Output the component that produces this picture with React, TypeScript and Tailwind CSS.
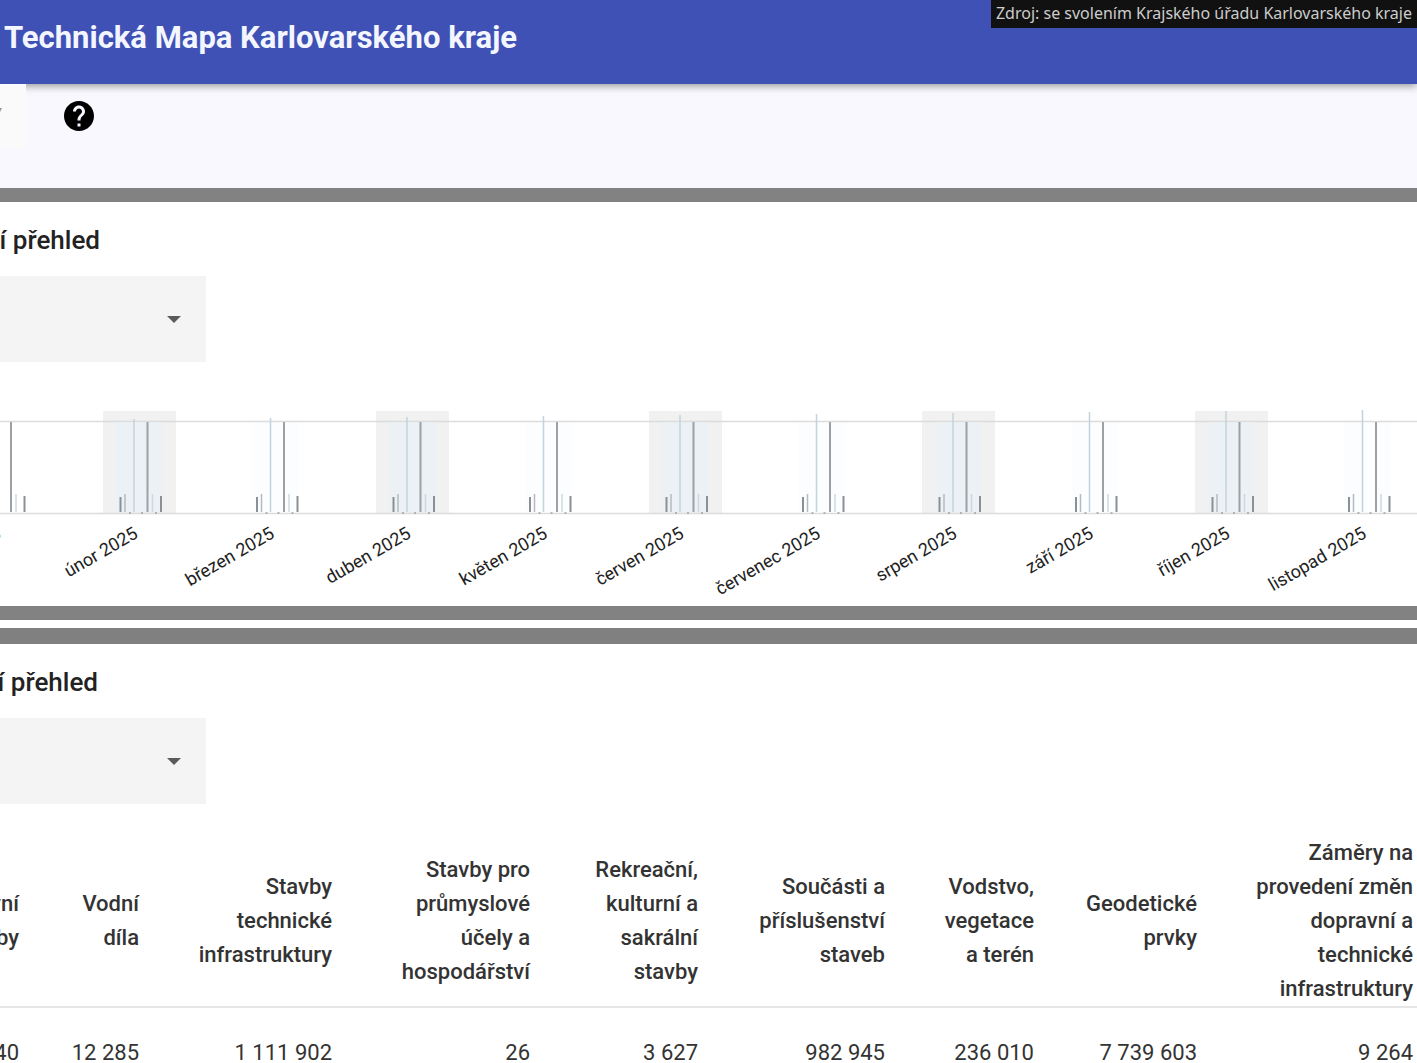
import React from 'react';
import { MdHelp } from 'react-icons/md';

interface OverviewSelectProps {
  labelledBy: string;
}

interface Column {
  lines: string[];
  value: string;
}

const months = [
  'únor 2025',
  'březen 2025',
  'duben 2025',
  'květen 2025',
  'červen 2025',
  'červenec 2025',
  'srpen 2025',
  'září 2025',
  'říjen 2025',
  'listopad 2025',
];

const columns: Column[] = [
  { lines: ['vní', 'by'], value: '40' },
  { lines: ['Vodní', 'díla'], value: '12 285' },
  { lines: ['Stavby', 'technické', 'infrastruktury'], value: '1 111 902' },
  { lines: ['Stavby pro', 'průmyslové', 'účely a', 'hospodářství'], value: '26' },
  { lines: ['Rekreační,', 'kulturní a', 'sakrální', 'stavby'], value: '3 627' },
  { lines: ['Součásti a', 'příslušenství', 'staveb'], value: '982 945' },
  { lines: ['Vodstvo,', 'vegetace', 'a terén'], value: '236 010' },
  { lines: ['Geodetické', 'prvky'], value: '7 739 603' },
  { lines: ['Záměry na', 'provedení změn', 'dopravní a', 'technické', 'infrastruktury'], value: '9 264' },
];

const OverviewSelect: React.FC<OverviewSelectProps> = ({ labelledBy }) => {
  return (
    <div className="relative w-[206px]">
      <select
        aria-labelledby={labelledBy}
        className="block h-[86px] w-full appearance-none bg-[#f4f4f4] px-4 text-[22px] text-[#333]"
      >
        <option value=""></option>
      </select>
      <svg
        viewBox="0 0 16 8"
        className="pointer-events-none absolute right-6 top-10 h-2 w-4"
        fill="#5a5a5a"
        aria-hidden="true"
      >
        <path d="M1 0h14L8 7z" />
      </svg>
    </div>
  );
};

const MonthlyChart: React.FC = () => {
  return (
    <svg viewBox="0 0 1417 202" className="block w-full font-[Roboto,sans-serif]">
      {months.map((month, i) =>
        i % 2 === 0 ? (
          <rect key={month} x={103 + i * 136.5} y={7} width={73} height={102} fill="#f1f1f2" />
        ) : null
      )}
      <path d="M0 17.5H1417M0 109.5H1417" stroke="#dcdcdc" strokeWidth={1.5} />

      {/* tail of january */}
      <path d="M11 18V108" stroke="#9da1a5" strokeWidth={2} />
      <path d="M16 90V108" stroke="#cfd8de" strokeWidth={1.5} />
      <path d="M24.5 92V108" stroke="#8b9094" strokeWidth={2} />
      <text x={2} y={133} fontSize={18} fill="#222" textAnchor="end" transform="rotate(-30 2 133)">
        leden 2025
      </text>

      {months.map((month, i) => (
        <g key={month} transform={`translate(${i * 136.5} 0)`}>
          <rect x={116} y={18} width={46} height={90} fill="#e6f2fa" opacity={i % 2 === 0 ? 0.4 : 0.12} />
          <path d="M120.5 93V108" stroke="#8b9094" strokeWidth={2} />
          <path d="M125 90V108" stroke="#b4bbc0" strokeWidth={1.5} />
          <path d={`M134 ${15 - i}V108`} stroke="#c3d3dc" strokeWidth={1.5} />
          <path d="M147.5 18V108" stroke="#9da1a5" strokeWidth={2} />
          <path d="M152.5 90V108" stroke="#cfd8de" strokeWidth={1.5} />
          <path d="M161 92V108" stroke="#8b9094" strokeWidth={2} />
          <path d="M129 109h2M141 109h2M155 109h2" stroke="#9aa3a8" strokeWidth={1.5} />
          <text x={139} y={133} fontSize={18} fill="#222" textAnchor="end" transform="rotate(-30 139 133)">
            {month}
          </text>
        </g>
      ))}
    </svg>
  );
};

const StatsTable: React.FC = () => {
  return (
    <table className="w-full table-fixed border-collapse text-[22px] leading-[34px] text-[#333]">
      <colgroup>
        <col className="w-[19px]" />
        <col className="w-[120px]" />
        <col className="w-[193px]" />
        <col className="w-[198px]" />
        <col className="w-[168px]" />
        <col className="w-[187px]" />
        <col className="w-[149px]" />
        <col className="w-[163px]" />
        <col className="w-[220px]" />
      </colgroup>
      <thead>
        <tr className="border-b-2 border-[#e6e6e6]">
          {columns.map((column, i) => (
            <th key={i} scope="col" className="p-0 align-middle font-medium last:pr-1">
              <div className="flex flex-col items-end whitespace-nowrap">
                {column.lines.map((line) => (
                  <span key={line}>{line}</span>
                ))}
              </div>
            </th>
          ))}
        </tr>
      </thead>
      <tbody>
        <tr>
          {columns.map((column, i) => (
            <td key={i} className="px-0 py-7 last:pr-1">
              <div className="flex justify-end whitespace-nowrap">{column.value}</div>
            </td>
          ))}
        </tr>
      </tbody>
    </table>
  );
};

const App: React.FC = () => {
  return (
    <div className="relative h-screen overflow-hidden bg-white font-[Roboto,sans-serif] text-[#222]">
      <header className="relative flex h-[84px] items-start bg-[#3f51b5] px-1 pt-5 shadow-[0_2px_8px_rgba(0,0,0,0.4)]">
        <h1 className="text-[31px] leading-9 font-bold text-[#f4f6ff]">Technická Mapa Karlovarského kraje</h1>
      </header>
      <p className="absolute right-0 top-0 bg-[#111] px-[5px] pb-0.5 font-['Noto_Sans',sans-serif] text-base leading-[26px] text-[#ccc]">
        Zdroj: se svolením Krajského úřadu Karlovarského kraje
      </p>

      <div className="flex h-[104px] items-start gap-[35px] bg-[#f8f8fe]">
        <div className="relative">
          <select aria-label="Vrstva" className="block h-16 w-[26px] appearance-none bg-[#fafafa]">
            <option value=""></option>
          </select>
          <svg viewBox="0 0 2 4" className="pointer-events-none absolute left-0 top-6 h-1 w-0.5" fill="#999" aria-hidden="true">
            <path d="M0 0h2L0 4z" />
          </svg>
        </div>
        <button type="button" aria-label="Nápověda" className="mt-[14px] text-black">
          <MdHelp size={36} />
        </button>
      </div>

      <section className="border-y-[14px] border-[#828282]">
        <div className="flex w-[100px] justify-end pt-5 whitespace-nowrap">
          <h2 id="monthly-title" className="text-[26px] leading-9 font-medium">ní přehled</h2>
        </div>
        <div className="mt-[18px]">
          <OverviewSelect labelledBy="monthly-title" />
        </div>
        <div className="mt-[42px]">
          <MonthlyChart />
        </div>
      </section>

      <section className="mt-2 border-t-[16px] border-[#808080]">
        <div className="flex w-[98px] justify-end pt-5 whitespace-nowrap">
          <h2 id="total-title" className="text-[26px] leading-9 font-medium">í přehled</h2>
        </div>
        <div className="mt-[18px]">
          <OverviewSelect labelledBy="total-title" />
        </div>
        <div className="mt-8">
          <StatsTable />
        </div>
      </section>
    </div>
  );
};

export default App;
